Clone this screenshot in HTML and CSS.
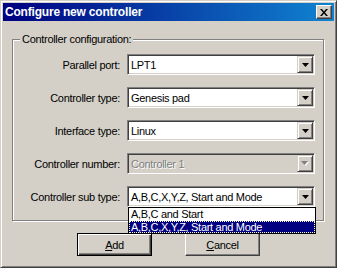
FILE: index.html
```html
<!DOCTYPE html>
<html>
<head>
<meta charset="utf-8">
<link rel="stylesheet" href="styles.css">
</head>
<body>
<div class="window">
  <div class="titlebar">
    <span class="title">Configure new controller</span>
    <span class="close"><svg width="8" height="7" viewBox="0 0 8 7"><path d="M0 0h2l2 2.5L6 0h2L5 3.5 8 7H6L4 4.5 2 7H0l3-3.5z" fill="#000"/></svg></span>
  </div>
  <div class="content">
    <div class="group">
      <span class="legend">Controller configuration:</span>
      <div class="row">
        <span class="label">Parallel port:</span>
        <div class="combo"><span class="value">LPT1</span><span class="drop"><svg width="7" height="4" viewBox="0 0 7 4"><path d="M0 0h7L3.5 4z" fill="#000"/></svg></span></div>
      </div>
      <div class="row">
        <span class="label">Controller type:</span>
        <div class="combo"><span class="value">Genesis pad</span><span class="drop"><svg width="7" height="4" viewBox="0 0 7 4"><path d="M0 0h7L3.5 4z" fill="#000"/></svg></span></div>
      </div>
      <div class="row">
        <span class="label">Interface type:</span>
        <div class="combo"><span class="value">Linux</span><span class="drop"><svg width="7" height="4" viewBox="0 0 7 4"><path d="M0 0h7L3.5 4z" fill="#000"/></svg></span></div>
      </div>
      <div class="row disabled">
        <span class="label">Controller number:</span>
        <div class="combo"><span class="value">Controller 1</span><span class="drop"><svg width="8" height="5" viewBox="0 0 8 5"><path d="M1 1h7L4.5 5z" fill="#fff"/><path d="M0 0h7L3.5 4z" fill="#808080"/></svg></span></div>
      </div>
      <div class="row">
        <span class="label">Controller sub type:</span>
        <div class="combo open"><span class="value">A,B,C,X,Y,Z, Start and Mode</span><span class="drop"><svg width="7" height="4" viewBox="0 0 7 4"><path d="M0 0h7L3.5 4z" fill="#000"/></svg></span>
          <div class="list">
            <div class="item">A,B,C and Start</div>
            <div class="item selected">A,B,C,X,Y,Z, Start and Mode</div>
          </div>
        </div>
      </div>
    </div>
    <div class="buttons">
      <button class="btn default"><u>A</u>dd</button>
      <button class="btn"><u>C</u>ancel</button>
    </div>
  </div>
</div>
</body>
</html>
```

FILE: styles.css
```css
html, body {
  margin: 0;
  padding: 0;
  background: #d4d0c8;
}
body {
  width: 337px;
  height: 268px;
  overflow: hidden;
  font-family: "Liberation Sans", Arial, sans-serif;
  font-size: 11px;
  letter-spacing: -0.3px;
  color: #000;
}
.window {
  box-sizing: border-box;
  width: 337px;
  height: 268px;
  border: 1px solid;
  border-color: #d4d0c8 #404040 #404040 #d4d0c8;
  box-shadow: inset 1px 1px 0 #fff, inset -1px -1px 0 #808080;
  padding: 2px;
  display: flex;
  flex-direction: column;
}
.titlebar {
  height: 18px;
  flex: none;
  background: linear-gradient(to right, #000080, #1084d0);
  display: flex;
  align-items: center;
  justify-content: space-between;
  padding: 0 2px;
}
.title {
  color: #fff;
  font-weight: bold;
  font-size: 12px;
  letter-spacing: -0.2px;
  margin-left: 0;
}
.close {
  box-sizing: border-box;
  width: 16px;
  height: 14px;
  background: #d4d0c8;
  border: 1px solid;
  border-color: #fff #404040 #404040 #fff;
  box-shadow: inset -1px -1px 0 #808080;
  display: flex;
  align-items: center;
  justify-content: center;
}
.content {
  display: flex;
  flex-direction: column;
}
.group {
  position: relative;
  box-sizing: border-box;
  width: 312px;
  height: 182px;
  margin: 18px 0 0 9px;
  border: 1px solid #808080;
  box-shadow: 1px 1px 0 #fff, inset 1px 1px 0 #fff;
  padding-top: 14px;
  display: flex;
  flex-direction: column;
  gap: 12px;
}
.legend {
  position: absolute;
  top: -8px;
  left: 7px;
  padding: 0 2px;
  background: #d4d0c8;
  line-height: 14px;
}
.row {
  display: flex;
  align-items: center;
  height: 21px;
}
.label {
  width: 107px;
  text-align: right;
  margin-right: 7px;
}
.combo {
  position: relative;
  box-sizing: border-box;
  width: 188px;
  height: 21px;
  background: #fff;
  border: 1px solid;
  border-color: #808080 #fff #fff #808080;
  box-shadow: inset 1px 1px 0 #404040, inset -1px -1px 0 #d4d0c8;
  display: flex;
  align-items: center;
}
.value {
  padding-left: 3px;
  white-space: nowrap;
}
.drop {
  box-sizing: border-box;
  width: 16px;
  height: 17px;
  margin-left: auto;
  margin-right: 1px;
  background: #d4d0c8;
  border: 1px solid;
  border-color: #d4d0c8 #404040 #404040 #d4d0c8;
  box-shadow: inset 1px 1px 0 #fff, inset -1px -1px 0 #808080;
  display: flex;
  align-items: center;
  justify-content: center;
}
.drop svg {
  display: block;
}
.disabled .combo {
  background: #d4d0c8;
}
.disabled .value {
  color: #808080;
  text-shadow: 1px 1px 0 #fff;
}
.list {
  position: absolute;
  top: 20px;
  left: 0;
  box-sizing: border-box;
  width: 188px;
  border: 1px solid #000;
  background: #fff;
  z-index: 2;
}
.item {
  box-sizing: border-box;
  height: 13px;
  line-height: 12px;
  padding-left: 2px;
  white-space: nowrap;
}
.item.selected {
  height: 12px;
  line-height: 10px;
  padding-left: 1px;
  background: #000080;
  color: #fff;
  border: 1px dotted #ffffc0;
}
.buttons {
  display: flex;
  justify-content: center;
  gap: 33px;
  margin-top: 12px;
}
.btn {
  box-sizing: border-box;
  width: 75px;
  height: 23px;
  padding: 0;
  margin: 0;
  font-family: inherit;
  font-size: 11px;
  letter-spacing: -0.3px;
  color: #000;
  background: #d4d0c8;
  border: 1px solid;
  border-color: #fff #404040 #404040 #fff;
  box-shadow: inset -1px -1px 0 #808080;
}
.btn.default {
  border: 1px solid #000;
  box-shadow: inset 1px 1px 0 #fff, inset -1px -1px 0 #404040, inset -2px -2px 0 #808080;
}
```
